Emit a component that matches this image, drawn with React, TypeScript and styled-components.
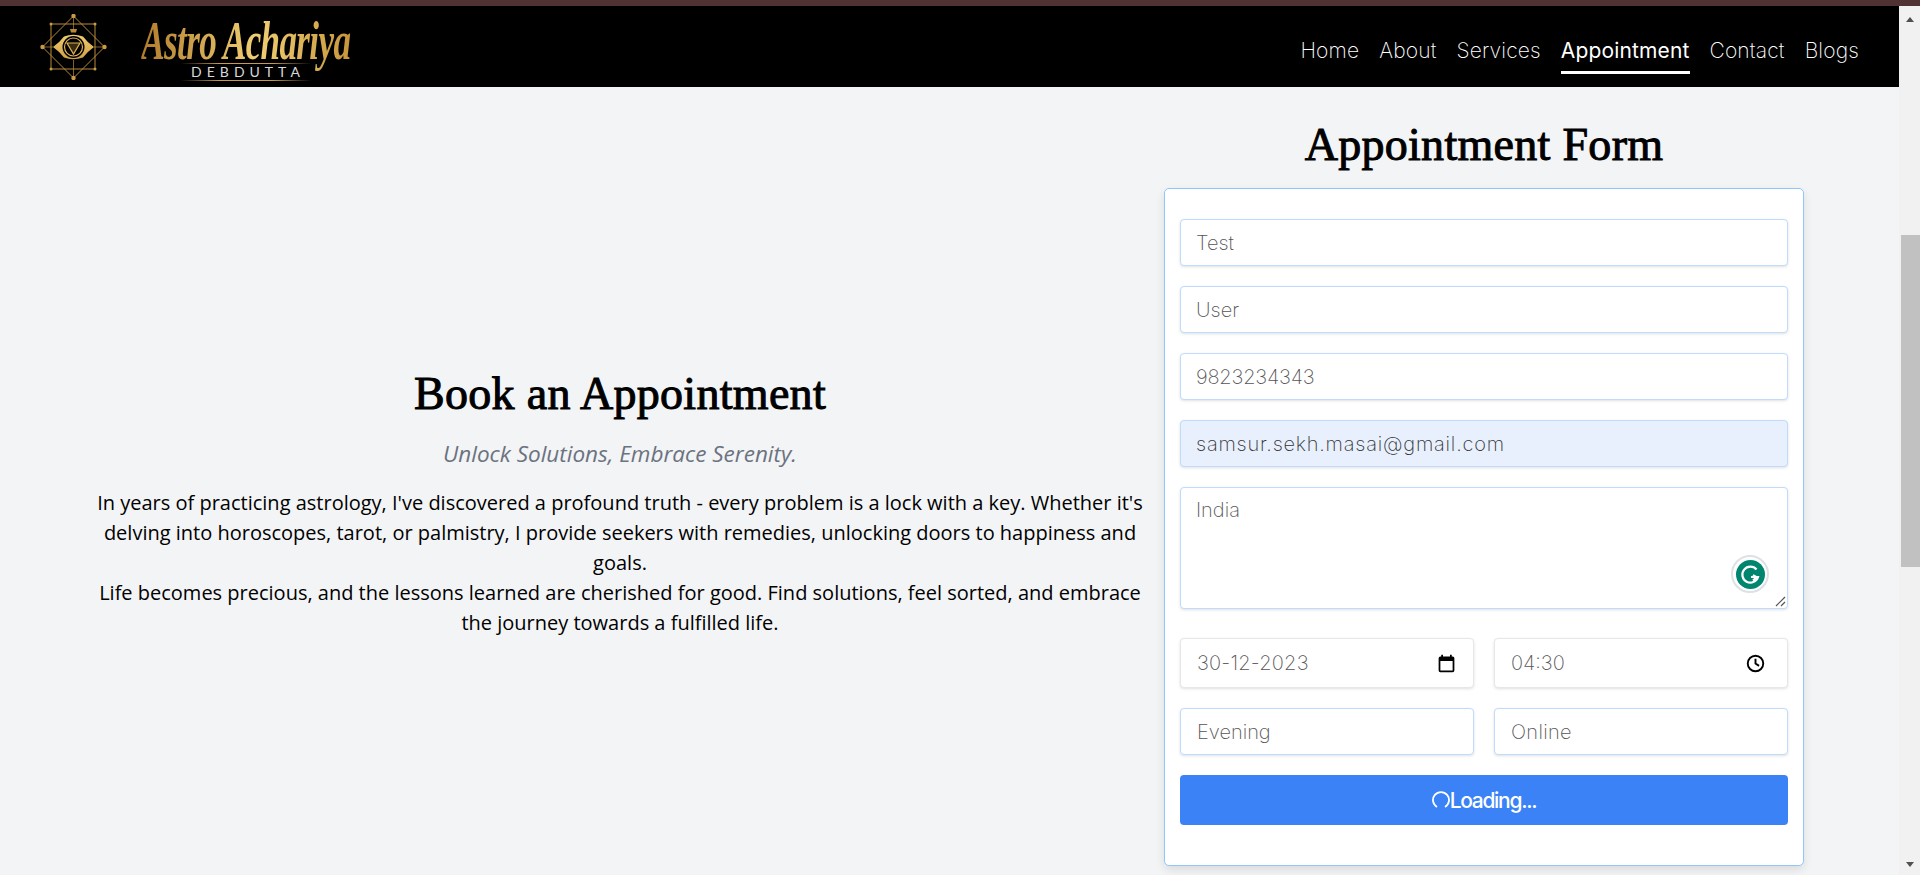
import React from "react";
import styled, { createGlobalStyle } from "styled-components";

const Global = createGlobalStyle`
  html, body { margin: 0; padding: 0; height: 875px; overflow: hidden; background: #f3f4f6; }
  * { box-sizing: border-box; }
`;
const Shell = styled.div`display:flex;flex-direction:column;width:1920px;height:875px;`;
const Strip = styled.div`height:6px;background:#503232;flex:none;`;
const Body = styled.div`display:flex;flex:1;min-height:0;`;
const Page = styled.div`flex:1;display:flex;flex-direction:column;min-width:0;background:#f3f4f6;`;
const Scrollbar = styled.div`width:21px;flex:none;background:#f1f1f1;display:flex;flex-direction:column;align-items:center;`;
const ArrowUp = styled.div`width:0;height:0;margin-top:11px;border-left:4.5px solid transparent;border-right:4.5px solid transparent;border-bottom:5px solid #505050;`;
const ArrowDown = styled.div`width:0;height:0;margin-top:auto;margin-bottom:8px;border-left:4.5px solid transparent;border-right:4.5px solid transparent;border-top:5px solid #505050;`;
const ScrollThumb = styled.div`width:19px;height:332px;margin-top:213px;background:#c1c1c1;align-self:flex-end;`;
const Nav = styled.nav`height:81px;background:#000;display:flex;align-items:center;justify-content:space-between;padding:0 40px;flex:none;`;
const Brand = styled.div`display:flex;align-items:center;gap:35px;`;
const Wordmark = styled.div`display:flex;flex-direction:column;align-items:center;width:207px;margin-top:7px;`;
const Script = styled.div`font-family:"Liberation Serif",serif;font-style:italic;font-weight:700;font-size:54px;line-height:44px;letter-spacing:-1px;white-space:nowrap;transform:scaleX(.65);padding-bottom:14px;margin-bottom:-14px;background:linear-gradient(90deg,#b07c2c,#f0cf73 55%,#c8963c);-webkit-background-clip:text;background-clip:text;color:transparent;`;
const SubMark = styled.div`width:130px;height:18px;font-family:"Lato",sans-serif;font-size:14px;letter-spacing:5px;padding-left:5px;line-height:16px;text-align:center;color:#d8d8d8;border-style:solid;border-width:1px 0;border-image:linear-gradient(90deg,transparent,#c89b4a 30%,#c89b4a 70%,transparent) 1;white-space:nowrap;`;
const Links = styled.div`display:flex;gap:20px;`;
const NavLink = styled.a<{ $active?: boolean }>`font-family:"Inter",sans-serif;font-size:21px;letter-spacing:.15px;font-weight:${p=>p.$active?400:200};color:#fff;padding:4px 0 7px;border-bottom:3px solid ${p=>p.$active?"#fff":"transparent"};line-height:27px;margin-top:13px;`;
const Main = styled.main`flex:1;display:grid;grid-template-columns:1164px 640px;min-height:0;`;
const Intro = styled.section`display:flex;flex-direction:column;align-items:center;text-align:center;padding:279px 20px 0 96px;`;
const IntroTitle = styled.h2`font-family:"Liberation Serif",serif;font-weight:400;font-size:46px;line-height:56px;letter-spacing:.3px;margin:0;color:#000;-webkit-text-stroke:1px #000;`;
const Tagline = styled.p`font-family:"Open Sans",sans-serif;font-style:italic;font-size:22.5px;line-height:30px;color:#6b7280;margin:17px 0 0;`;
const Copy = styled.p`font-family:"Open Sans",sans-serif;font-size:20px;line-height:30px;color:#000;margin:19px 0 0;`;
const FormColumn = styled.section`display:flex;flex-direction:column;`;
const FormTitle = styled.h1`font-family:"Liberation Serif",serif;font-weight:400;font-size:46px;line-height:56px;letter-spacing:.3px;margin:30px 0 0;text-align:center;color:#000;-webkit-text-stroke:1px #000;`;
const Card = styled.form`margin-top:15px;height:678px;background:#fff;border:1px solid #93c5fd;border-radius:5px;padding:30px 15px 0;box-shadow:0 4px 10px rgba(0,0,0,.1);display:flex;flex-direction:column;`;
const Field = styled.input<{ $filled?: boolean; $track?: number }>`width:100%;height:47px;margin-bottom:20px;padding:0 15px;border:1px solid #bfdbfe;border-radius:4px;background:${p=>p.$filled?"#e8f0fe":"#fff"};box-shadow:0 1px 3px rgba(0,0,0,.12);font:200 20px "Inter",sans-serif;letter-spacing:${p=>p.$track||0}px;color:#333;outline:none;flex:none;&::placeholder{color:#555;opacity:1;}`;
const AreaWrap = styled.div`position:relative;height:122px;margin-bottom:29px;flex:none;`;
const Area = styled.textarea`display:block;width:100%;height:100%;padding:10px 15px;border:1px solid #bfdbfe;border-radius:4px;box-shadow:0 1px 3px rgba(0,0,0,.12);font:200 20px "Inter",sans-serif;outline:none;resize:none;&::placeholder{color:#555;opacity:1;}`;
const GBadge = styled.div`position:absolute;right:19px;bottom:16px;width:38px;height:38px;border-radius:50%;background:#fff;border:2px solid #dde0e6;display:flex;align-items:center;justify-content:center;`;
const Grip = styled.svg`position:absolute;right:2px;bottom:2px;`;
const Pair = styled.div`display:grid;grid-template-columns:1fr 1fr;gap:20px;`;
const Picker = styled.div<{ $tall?: boolean; $track?: number }>`height:${p=>p.$tall?"50px":"47px"};margin-bottom:20px;padding:0 16px;display:flex;align-items:center;justify-content:space-between;border:1px solid ${p=>p.$tall?"#e5e7eb":"#bfdbfe"};border-radius:4px;background:#fff;box-shadow:0 1px 3px rgba(0,0,0,.12);font:200 20px "Inter",sans-serif;letter-spacing:${p=>p.$track||0}px;color:#555;`;
const ClockSvg = styled.svg`margin-right:6px;`;
const SubmitBtn = styled.button`height:50px;border:0;border-radius:4px;background:#3b82f6;color:#fff;font:500 21px "Inter",sans-serif;letter-spacing:-1.3px;display:flex;align-items:center;justify-content:center;`;

const dots: [number, number, number][] = [[33.5,2,2.2],[64.5,33,2.2],[33.5,64,2.2],[2.5,33,2.2],[11,10,1.5],[55,10,1.5],[55,55,1.5],[11,55,1.5]];
const Logo = () => (
  <svg width="67" height="66" viewBox="0 0 67 66" fill="none" stroke="#b8893a" strokeWidth="1">
    <defs>
      <linearGradient id="gold" x1="0" y1="0" x2="0" y2="1">
        <stop offset="0" stopColor="#f0cd70" />
        <stop offset="1" stopColor="#d19f45" />
      </linearGradient>
    </defs>
    <rect x="11" y="10" width="44" height="45" />
    <path d="M33.5 2 64.5 33 33.5 64 2.500 33Z" />
    <path d="M2.500 33H13M54 33H64.500M33.500 2V16M33.500 46V64" strokeWidth=".7" />
    {dots.map(([x,y,r],i)=><circle key={i} cx={x} cy={y} r={r} fill="#c99b45" stroke="none"/>)}
    <path d="M13 33Q20 28 24 22.500Q33 19 43 22.500Q47 28 54 33Q47 38 43 43.500Q33 47 24 43.500Q20 38 13 33Z" fill="url(#gold)" stroke="none" />
    <circle cx="33.500" cy="33" r="11" fill="#000" stroke="none" />
    <circle cx="33.500" cy="33" r="9" stroke="#dcb158" strokeWidth="1.200" />
    <path d="M27 29H40L33.500 40Z" stroke="#dcb158" strokeWidth="1.200" fill="#3a2b10" />
    <path d="M30 15h7l-1 3.500h-5z" fill="#b8893a" stroke="none" />
  </svg>
);
const CalIcon = () => (<svg width="21" height="21" viewBox="0 0 24 24" fill="#000"><path d="M19 4h-1V2h-2v2H8V2H6v2H5a2 2 0 0 0-2 2v14a2 2 0 0 0 2 2h14a2 2 0 0 0 2-2V6a2 2 0 0 0-2-2Zm0 16H5V9h14v11Z"/></svg>);
const ClockIcon = () => (<ClockSvg width="19" height="19" viewBox="0 0 24 24" fill="none" stroke="#000" strokeWidth="2.400"><circle cx="12" cy="12" r="9.800"/><path d="M12 6v6l4.500 3"/></ClockSvg>);
const GIcon = () => (<svg width="29" height="29" viewBox="0 0 29 29"><circle cx="14.500" cy="14.500" r="14.500" fill="#00856f"/><path d="M20.500 9.500a8 8 0 1 0 1.500 7.500h-7" fill="none" stroke="#fff" strokeWidth="2.200"/><path d="M17 20.500l3.500-3.500-3.500-2" fill="none" stroke="#fff" strokeWidth="2"/></svg>);
const Spinner = () => (<svg width="18" height="18" viewBox="0 0 18 18" fill="none" stroke="#fff" strokeWidth="1.800"><path d="M5 16A8 8 0 1 1 13 16"/></svg>);

export default function App() {
  return (
    <Shell>
      <Global />
      <Strip />
      <Body>
        <Page>
          <Nav>
            <Brand>
              <Logo />
              <Wordmark>
                <Script>Astro Achariya</Script>
                <SubMark>DEBDUTTA</SubMark>
              </Wordmark>
            </Brand>
            <Links>
              <NavLink>Home</NavLink>
              <NavLink>About</NavLink>
              <NavLink>Services</NavLink>
              <NavLink $active>Appointment</NavLink>
              <NavLink>Contact</NavLink>
              <NavLink>Blogs</NavLink>
            </Links>
          </Nav>
          <Main>
            <Intro>
              <IntroTitle>Book an Appointment</IntroTitle>
              <Tagline>Unlock Solutions, Embrace Serenity.</Tagline>
              <Copy>In years of practicing astrology, I've discovered a profound truth - every problem is a lock with a key. Whether it's delving into horoscopes, tarot, or palmistry, I provide seekers with remedies, unlocking doors to happiness and goals.<br/>Life becomes precious, and the lessons learned are cherished for good. Find solutions, feel sorted, and embrace the journey towards a fulfilled life.</Copy>
            </Intro>
            <FormColumn>
              <FormTitle>Appointment Form</FormTitle>
              <Card>
                <Field placeholder="Test" readOnly />
                <Field placeholder="User" readOnly />
                <Field placeholder="9823234343" $track={-.2} readOnly />
                <Field $filled $track={.78} defaultValue="samsur.sekh.masai@gmail.com" readOnly />
                <AreaWrap>
                  <Area placeholder="India" readOnly />
                  <GBadge><GIcon /></GBadge>
                  <Grip width="12" height="12" viewBox="0 0 12 12" stroke="#555" strokeWidth="1.200"><path d="M2 11 11 2M7 11l4-4" /></Grip>
                </AreaWrap>
                <Pair>
                  <Picker $tall $track={.2}>30-12-2023<CalIcon /></Picker>
                  <Picker $tall>04:30<ClockIcon /></Picker>
                </Pair>
                <Pair>
                  <Picker>Evening</Picker>
                  <Picker $track={.3}>Online</Picker>
                </Pair>
                <SubmitBtn type="button"><Spinner />Loading...</SubmitBtn>
              </Card>
            </FormColumn>
          </Main>
        </Page>
        <Scrollbar><ArrowUp /><ScrollThumb /><ArrowDown /></Scrollbar>
      </Body>
    </Shell>
  );
}
